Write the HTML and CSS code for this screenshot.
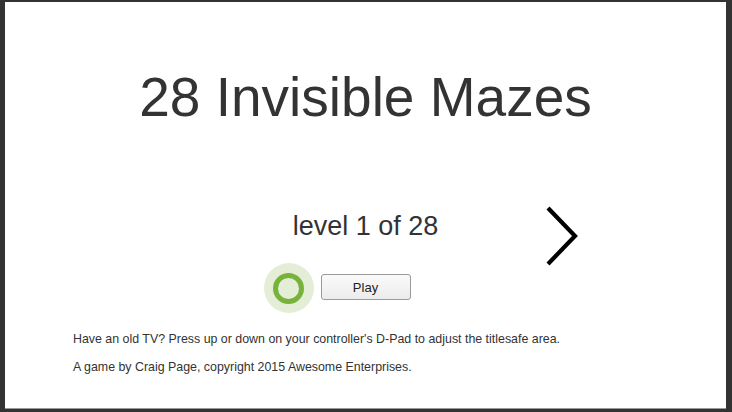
FILE: index.html
```html
<!DOCTYPE html>
<html>
<head>
<meta charset="utf-8">
<link rel="stylesheet" href="styles.css">
</head>
<body>
<div class="screen">
  <h1 class="title">28 Invisible Mazes</h1>
  <div class="level-row">
    <div class="level">level 1 of 28</div>
    <svg class="next" width="34" height="60" viewBox="0 0 34 60"><polyline points="3,2 30,30 3,58" fill="none" stroke="#000" stroke-width="4.2"/></svg>
  </div>
  <div class="play-row">
    <div class="play-wrap">
      <div class="spinner"><div class="ring"></div></div>
      <button class="play">Play</button>
    </div>
  </div>
  <p class="info">Have an old TV? Press up or down on your controller's D-Pad to adjust the titlesafe area.</p>
  <p class="info">A game by Craig Page, copyright 2015 Awesome Enterprises.</p>
</div>
</body>
</html>
```
FILE: styles.css
```css
html, body { margin: 0; padding: 0; }
body {
  background: #333;
  width: 732px;
  height: 412px;
  overflow: hidden;
  font-family: "Liberation Sans", Arial, sans-serif;
  color: #333;
}
.screen {
  margin: 2px 6px 0 5px;
  height: 406px;
  background: #fff;
  border-bottom: 1px solid #999;
  display: flex;
  flex-direction: column;
}
.title {
  margin: 63px 0 0 0;
  font-weight: normal;
  font-size: 55px;
  line-height: 64px;
  text-align: center;
  color: #333;
}
.level-row {
  position: relative;
  margin-top: 77px;
  height: 40px;
  display: flex;
  justify-content: center;
}
.level {
  font-size: 27px;
  line-height: 40px;
  color: #333;
}
.next {
  position: absolute;
  left: 540px;
  top: 0;
}
.play-row {
  margin-top: 28px;
  display: flex;
  justify-content: center;
}
.play-wrap { position: relative; }
.spinner {
  position: absolute;
  left: -57px;
  top: -11px;
  width: 50px;
  height: 50px;
  border-radius: 50%;
  background: #e4eed6;
  display: flex;
  align-items: center;
  justify-content: center;
}
.ring {
  width: 21px;
  height: 21px;
  border-radius: 50%;
  border: 5.5px solid #77b23a;
}
.play {
  width: 90px;
  height: 26px;
  border: 1px solid #9a9a9a;
  border-radius: 3px;
  background: linear-gradient(#fafafa, #ececec);
  font-family: "Liberation Sans", Arial, sans-serif;
  font-size: 13px;
  color: #222;
  padding: 0;
}
.info {
  margin: 0 0 0 68px;
  font-size: 12.4px;
  line-height: 16px;
  color: #333;
}
.play-row + .info { margin-top: 31px; }
.info + .info { margin-top: 12px; }
```
